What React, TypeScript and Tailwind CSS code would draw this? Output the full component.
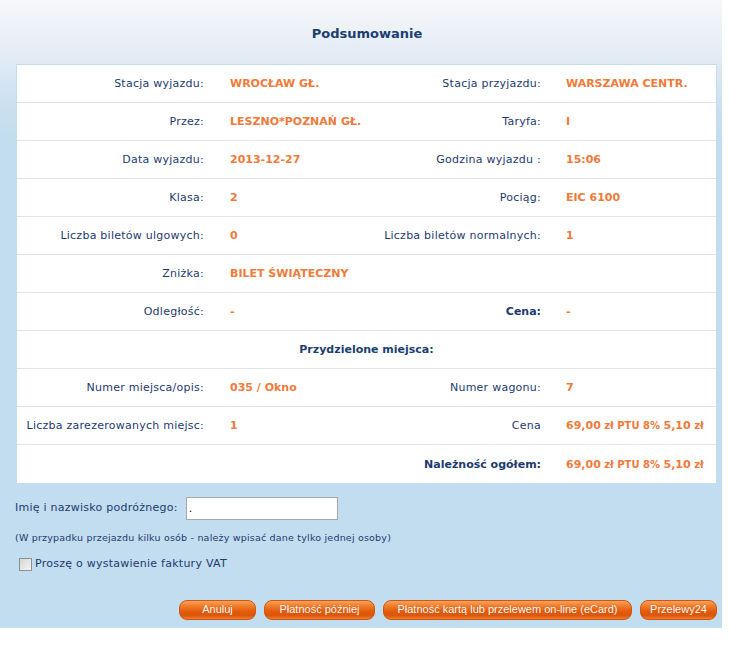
import React from "react";

const L = "text-right pr-[10px] text-[#1d3a6f] whitespace-nowrap tracking-[0.25px]";
const V = "font-bold text-[#ef7a3a] whitespace-nowrap";

function Price() {
  return (
    <span className="font-bold text-[#ef7a3a]">
      69,00<span className="text-[10px]"> zł PTU 8% </span>5,10<span className="text-[10px]"> zł</span>
    </span>
  );
}

function Row({
  a,
  b,
  c,
  d,
  cBold,
  last,
}: {
  a?: React.ReactNode;
  b?: React.ReactNode;
  c?: React.ReactNode;
  d?: React.ReactNode;
  cBold?: boolean;
  last?: boolean;
}) {
  return (
    <div
      className={
        "grid grid-cols-[197px_166px_171px_1fr] h-[38px] pt-[2px] items-center " +
        (last ? "" : "border-b border-[#e3e3e3]")
      }
    >
      <div className={L}>{a}</div>
      <div className={"pl-[16px] " + V}>{b}</div>
      <div className={L + (cBold ? " font-bold tracking-normal" : "")}>{c}</div>
      <div className={"pl-[15px] " + V}>{d}</div>
    </div>
  );
}

export default function App() {
  return (
    <div className="w-[730px] h-[664px] bg-white font-['DejaVu_Sans',Verdana,sans-serif] text-[11px]">
      <div className="w-[722px] h-[628px] bg-[linear-gradient(to_bottom,#f8f8f9_0px,#e4edf5_50px,#c9dff0_110px,#c2ddef_140px,#c2ddef_100%)] pt-[25px]">
        <div className="text-center text-[13px] font-bold text-[#1b3e72] h-[18px] leading-[18px] pl-[12px]">
          Podsumowanie
        </div>
        <div className="ml-[16px] mt-[21px] w-[701px] bg-white border border-[#c6dcec]">
          <Row a="Stacja wyjazdu:" b="WROCŁAW GŁ." c="Stacja przyjazdu:" d="WARSZAWA CENTR." />
          <Row a="Przez:" b="LESZNO*POZNAŃ GŁ." c="Taryfa:" d="I" />
          <Row a="Data wyjazdu:" b="2013-12-27" c="Godzina wyjazdu :" d="15:06" />
          <Row a="Klasa:" b="2" c="Pociąg:" d="EIC 6100" />
          <Row a="Liczba biletów ulgowych:" b="0" c="Liczba biletów normalnych:" d="1" />
          <Row a="Zniżka:" b="BILET ŚWIĄTECZNY" />
          <Row a="Odległość:" b="-" c="Cena:" cBold d="-" />
          <div className="h-[38px] pt-[2px] flex items-center justify-center border-b border-[#e3e3e3] font-bold text-[#1b3e72]">
            Przydzielone miejsca:
          </div>
          <Row a="Numer miejsca/opis:" b="035 / Okno" c="Numer wagonu:" d="7" />
          <Row a="Liczba zarezerowanych miejsc:" b="1" c="Cena" d={<Price />} />
          <Row c="Należność ogółem:" cBold d={<Price />} last />
        </div>

        <div className="mt-[13px] ml-[15px] flex items-center text-[#1d3a6f] text-[11px] tracking-[0.25px]">
          <span>Imię i nazwisko podróżnego:</span>
          <input
            readOnly
            value="."
            className="ml-[8px] w-[152px] h-[23px] bg-white border border-[#a9a9a9] px-[2px] text-[11px] text-black outline-none"
          />
        </div>
        <div className="mt-[11px] ml-[15px] text-[9.5px] tracking-[0.2px] text-[#1d3a6f] h-[14px] leading-[14px]">
          (W przypadku przejazdu kilku osób - należy wpisać dane tylko jednej osoby)
        </div>
        <div className="mt-[11px] ml-[19px] flex items-center gap-[3px] text-[#1d3a6f] text-[11px] tracking-[0.25px]">
          <span className="w-[13px] h-[13px] border border-[#8e8f8f] bg-[linear-gradient(135deg,#d6d6d6,#f5f5f5)] inline-block" />
          <span>Proszę o wystawienie faktury VAT</span>
        </div>

        <div className="mt-[27px] flex justify-end gap-[8px] pr-[5px] font-['Liberation_Sans',Arial,sans-serif] text-[11px] text-white">
          {[
            ["Anuluj", "w-[77px]"],
            ["Płatność później", "w-[111px]"],
            ["Płatność kartą lub przelewem on-line (eCard)", "w-[249px]"],
            ["Przelewy24", "w-[77px]"],
          ].map(([t, w]) => (
            <div
              key={t}
              className={
                w +
                " h-[20px] rounded-[8px] border border-[#d0570d] bg-[linear-gradient(to_bottom,#f8a15c_0%,#f07a26_30%,#e05a0b_60%,#dd580a_82%,#ef7f34_100%)] flex items-center justify-center leading-none [text-shadow:0_0_1px_#b84300]"
              }
            >
              {t}
            </div>
          ))}
        </div>
      </div>
    </div>
  );
}
